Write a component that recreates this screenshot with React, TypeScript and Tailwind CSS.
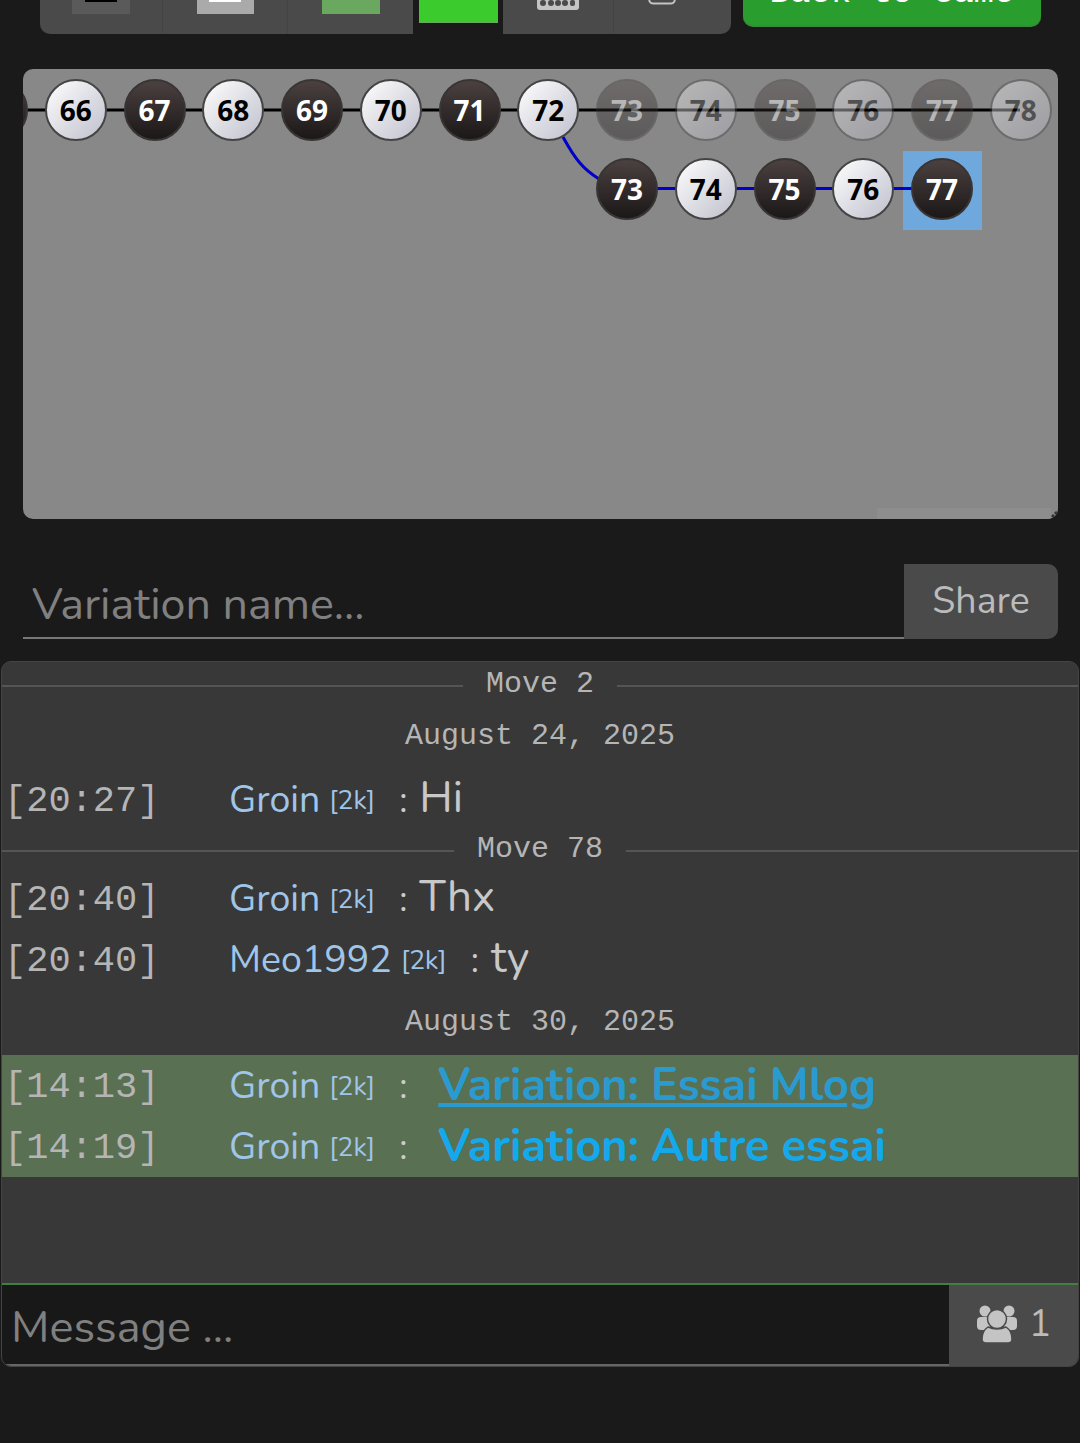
import React from 'react';

const SANS = "font-['Nunito','Noto_Sans',sans-serif]";

type Stone = { n: number; x: number; y: number; ghost?: boolean };

const step = 78.75;
const mainLine: Stone[] = Array.from({ length: 14 }, (_, i) => ({
  n: 65 + i,
  x: -26 + step * i,
  y: 41,
  ghost: 65 + i > 72,
}));
const variation: Stone[] = [73, 74, 75, 76, 77].map((n, i) => ({
  n,
  x: 604 + step * i,
  y: 120,
}));

function TreeStone({ stone }: { stone: Stone }) {
  const black = stone.n % 2 === 1;
  return (
    <div
      className={`absolute w-[62px] h-[62px] -ml-[31px] -mt-[31px] rounded-full flex items-center justify-center font-['Open_Sans',sans-serif] font-bold text-[28px] border-2 ${
        black
          ? 'bg-gradient-to-b from-[#4b4140] to-[#1c1818] border-[#3a3535] text-white'
          : 'bg-gradient-to-br from-[#ffffff] to-[#bfc0cc] border-[#444444] text-black'
      } ${stone.ghost ? 'opacity-40' : ''}`}
      style={{ left: stone.x, top: stone.y }}
    >
      {stone.n}
    </div>
  );
}

function MoveTree() {
  return (
    <div className="relative ml-[23px] mt-[35px] w-[1035px] h-[450px] bg-[#888888] rounded-[10px] overflow-hidden">
      <div className="absolute left-[880px] top-[82px] w-[79px] h-[79px] bg-[#6fa8dc]" />
      <div className="absolute left-[854px] bottom-0 w-[174px] h-[11px] bg-[#8d8d8d]" />
      <svg className="absolute inset-0" width="1035" height="450">
        <path d="M0 41 H997" stroke="#000" strokeWidth="3" fill="none" />
        <path d="M540 68 C552 90 560 100 576 110" stroke="#0000c8" strokeWidth="3" fill="none" />
        <path d="M604 119.5 H920" stroke="#0000c8" strokeWidth="3" fill="none" />
      </svg>
      {mainLine.map((s) => (
        <TreeStone key={`m${s.n}`} stone={s} />
      ))}
      {variation.map((s) => (
        <TreeStone key={`v${s.n}`} stone={s} />
      ))}
      <svg className="absolute right-0 bottom-0" width="8" height="8">
        <path d="M1 5 L3 3 L5 5 L3 7 Z M4 2 L6 0 L8 2 L6 4 Z" fill="#333" />
      </svg>
    </div>
  );
}

function MoveDivider({ label, className }: { label: string; className: string }) {
  return (
    <div className={`flex items-center font-['Liberation_Mono',monospace] text-[30px] text-[#b5b5b5] ${className}`}>
      <div className="flex-1 h-[2px] bg-[#555555]" />
      <span className="px-[23px] leading-none">{label}</span>
      <div className="flex-1 h-[2px] bg-[#555555]" />
    </div>
  );
}

function DateLine({ label }: { label: string }) {
  return (
    <div className="h-[65px] flex items-center justify-center font-['Liberation_Mono',monospace] text-[30px] text-[#b5b5b5]">
      {label}
    </div>
  );
}

function ChatRow({
  time,
  name,
  text,
  link,
}: {
  time: string;
  name: string;
  text?: string;
  link?: 'underline' | 'plain';
}) {
  return (
    <div className="h-[61px] flex items-center pl-[2px]">
      <span className="w-[225px] shrink-0 mt-[4px] font-['Liberation_Mono',monospace] text-[37px] text-[#b5b5b5]">{time}</span>
      <span className={`${SANS} mt-[2px] text-[37.5px] text-[#9fc5e8]`}>{name}</span>
      <span className={`${SANS} mt-[2px] text-[26.5px] text-[#9fc5e8] ml-[9px]`}>[2k]</span>
      <span className={`${SANS} mt-[2px] text-[36px] text-[#cccccc] ml-[24px]`}>:</span>
      {text && <span className={`${SANS} text-[44px] text-[#c8c8c8] ml-[12px] -mt-[4px]`}>{text}</span>}
      {link && (
        <span
          className={`${SANS} text-[45px] font-bold ml-[31px] ${
            link === 'underline' ? 'text-[#2a9bd0] underline' : 'text-[#14a9ec]'
          }`}
        >
          Variation: {link === 'underline' ? 'Essai Mlog' : 'Autre essai'}
        </span>
      )}
    </div>
  );
}

export default function App() {
  return (
    <div className="w-[1080px] h-[1443px] bg-[#1a1a1a] overflow-hidden">
      {/* Toolbar, mostly scrolled off */}
      <div className="h-[34px] flex items-start pl-[40px]">
        <div className="w-[373px] h-[34px] flex bg-[#4a4a4a] rounded-bl-[10px]">
          <div className="w-[123px] border-r border-[#444444] flex justify-center">
            <div className="w-[58px] h-[14px] bg-[#5a5a5a] flex justify-center">
              <div className="w-[32px] h-[2px] bg-black" />
            </div>
          </div>
          <div className="w-[125px] border-r border-[#444444] flex justify-center">
            <div className="w-[57px] h-[14px] bg-[#aaaaaa] flex justify-center">
              <div className="w-[32px] h-[2px] bg-white" />
            </div>
          </div>
          <div className="flex-1 flex justify-center">
            <div className="w-[58px] h-[14px] bg-[#6aa75f]" />
          </div>
        </div>
        <div className="w-[79px] h-[23px] ml-[6px] bg-[#3ccb2d] border-b-2 border-[#6aa75f]" />
        <div className="w-[228px] h-[34px] ml-[5px] flex bg-[#4a4a4a] rounded-br-[10px]">
          <div className="w-[111px] border-r border-[#444444] flex justify-center">
            <svg width="42" height="11" viewBox="0 0 42 11">
              <path d="M0 0 V7 Q0 10 3 10 H39 Q42 10 42 7 V0 Z" fill="#c4c4c4" />
              <circle cx="6" cy="3" r="3" fill="#4a4a4a" />
              <circle cx="14" cy="3" r="3" fill="#4a4a4a" />
              <circle cx="21" cy="3" r="3" fill="#4a4a4a" />
              <circle cx="28" cy="3" r="3" fill="#4a4a4a" />
              <rect x="33" y="0" width="5" height="6" rx="2" fill="#4a4a4a" />
            </svg>
          </div>
          <div className="flex-1 flex justify-center">
            <svg width="28" height="5" viewBox="0 0 28 5" className="-ml-[22px]">
              <path d="M1 0 L2 2 Q3 3.5 5 3.5 H23 Q25 3.5 26 2 L27 0" stroke="#c4c4c4" strokeWidth="2" fill="none" />
            </svg>
          </div>
        </div>
        <div className="w-[298px] h-[27px] ml-[12px] bg-[#2a9d2f] border-b-2 border-[#3a8a3a] rounded-b-[10px] overflow-hidden flex items-end justify-center">
          <span className="font-['Liberation_Mono',monospace] text-[34px] leading-none text-white pb-[15px] whitespace-nowrap">Back to Game</span>
        </div>
      </div>

      <MoveTree />

      {/* Variation name */}
      <div className="flex ml-[23px] mt-[45px] w-[1035px] h-[75px]">
        <input
          placeholder="Variation name..."
          className={`${SANS} flex-1 min-w-0 h-full bg-transparent border-b-2 border-[#777777] pl-[9px] pt-[8px] text-[44.8px] outline-none placeholder:text-[#808080]`}
        />
        <button className={`${SANS} w-[154px] h-full bg-[#4a4a4a] rounded-r-[10px] text-[37.5px] text-[#bbbbbb]`}>
          Share
        </button>
      </div>

      {/* Chat */}
      <div className="mt-[22px] mx-px h-[706px] flex flex-col bg-[#383838] border border-[#444444] rounded-[10px] overflow-hidden">
        <div className="flex-1">
          <MoveDivider label="Move 2" className="h-[42px] [&>div]:mt-[5px] [&>span]:mt-[2px]" />
          <DateLine label="August 24, 2025" />
          <ChatRow time="[20:27]" name="Groin" text="Hi" />
          <MoveDivider label="Move 78" className="h-[38px] [&>div]:mt-[3px]" />
          <ChatRow time="[20:40]" name="Groin" text="Thx" />
          <ChatRow time="[20:40]" name="Meo1992" text="ty" />
          <DateLine label="August 30, 2025" />
          <div className="bg-[#5a7052]">
            <ChatRow time="[14:13]" name="Groin" link="underline" />
            <ChatRow time="[14:19]" name="Groin" link="plain" />
          </div>
        </div>
        <div className="h-[83px] flex border-t-2 border-[#3f7f3f]">
          <input
            placeholder="Message ..."
            className={`${SANS} w-[947px] h-full bg-[#181818] border-b-2 border-[#666666] pl-[9px] pt-[6px] text-[45px] outline-none placeholder:text-[#808080]`}
          />
          <div className="flex-1 bg-[#4a4a4a] flex items-center justify-center gap-[11px] pb-[6px]">
            <svg width="42" height="40" viewBox="0 0 42 40">
              <circle cx="9" cy="8" r="5.5" fill="#c4c4c4" />
              <circle cx="33" cy="8" r="5.5" fill="#c4c4c4" />
              <rect x="1" y="14" width="13" height="13" rx="4" fill="#c4c4c4" />
              <rect x="28" y="14" width="13" height="13" rx="4" fill="#c4c4c4" />
              <circle cx="21" cy="16" r="9.5" fill="#c4c4c4" stroke="#4a4a4a" strokeWidth="1.5" />
              <path d="M12 24 Q21 28 30 24 Q36 28 36 36 Q36 40 32 40 H10 Q6 40 6 36 Q6 28 12 24 Z" fill="#c4c4c4" stroke="#4a4a4a" strokeWidth="1.5" />
            </svg>
            <span className={`${SANS} mt-[4px] text-[37.5px] text-[#bbbbbb]`}>1</span>
          </div>
        </div>
      </div>
    </div>
  );
}
